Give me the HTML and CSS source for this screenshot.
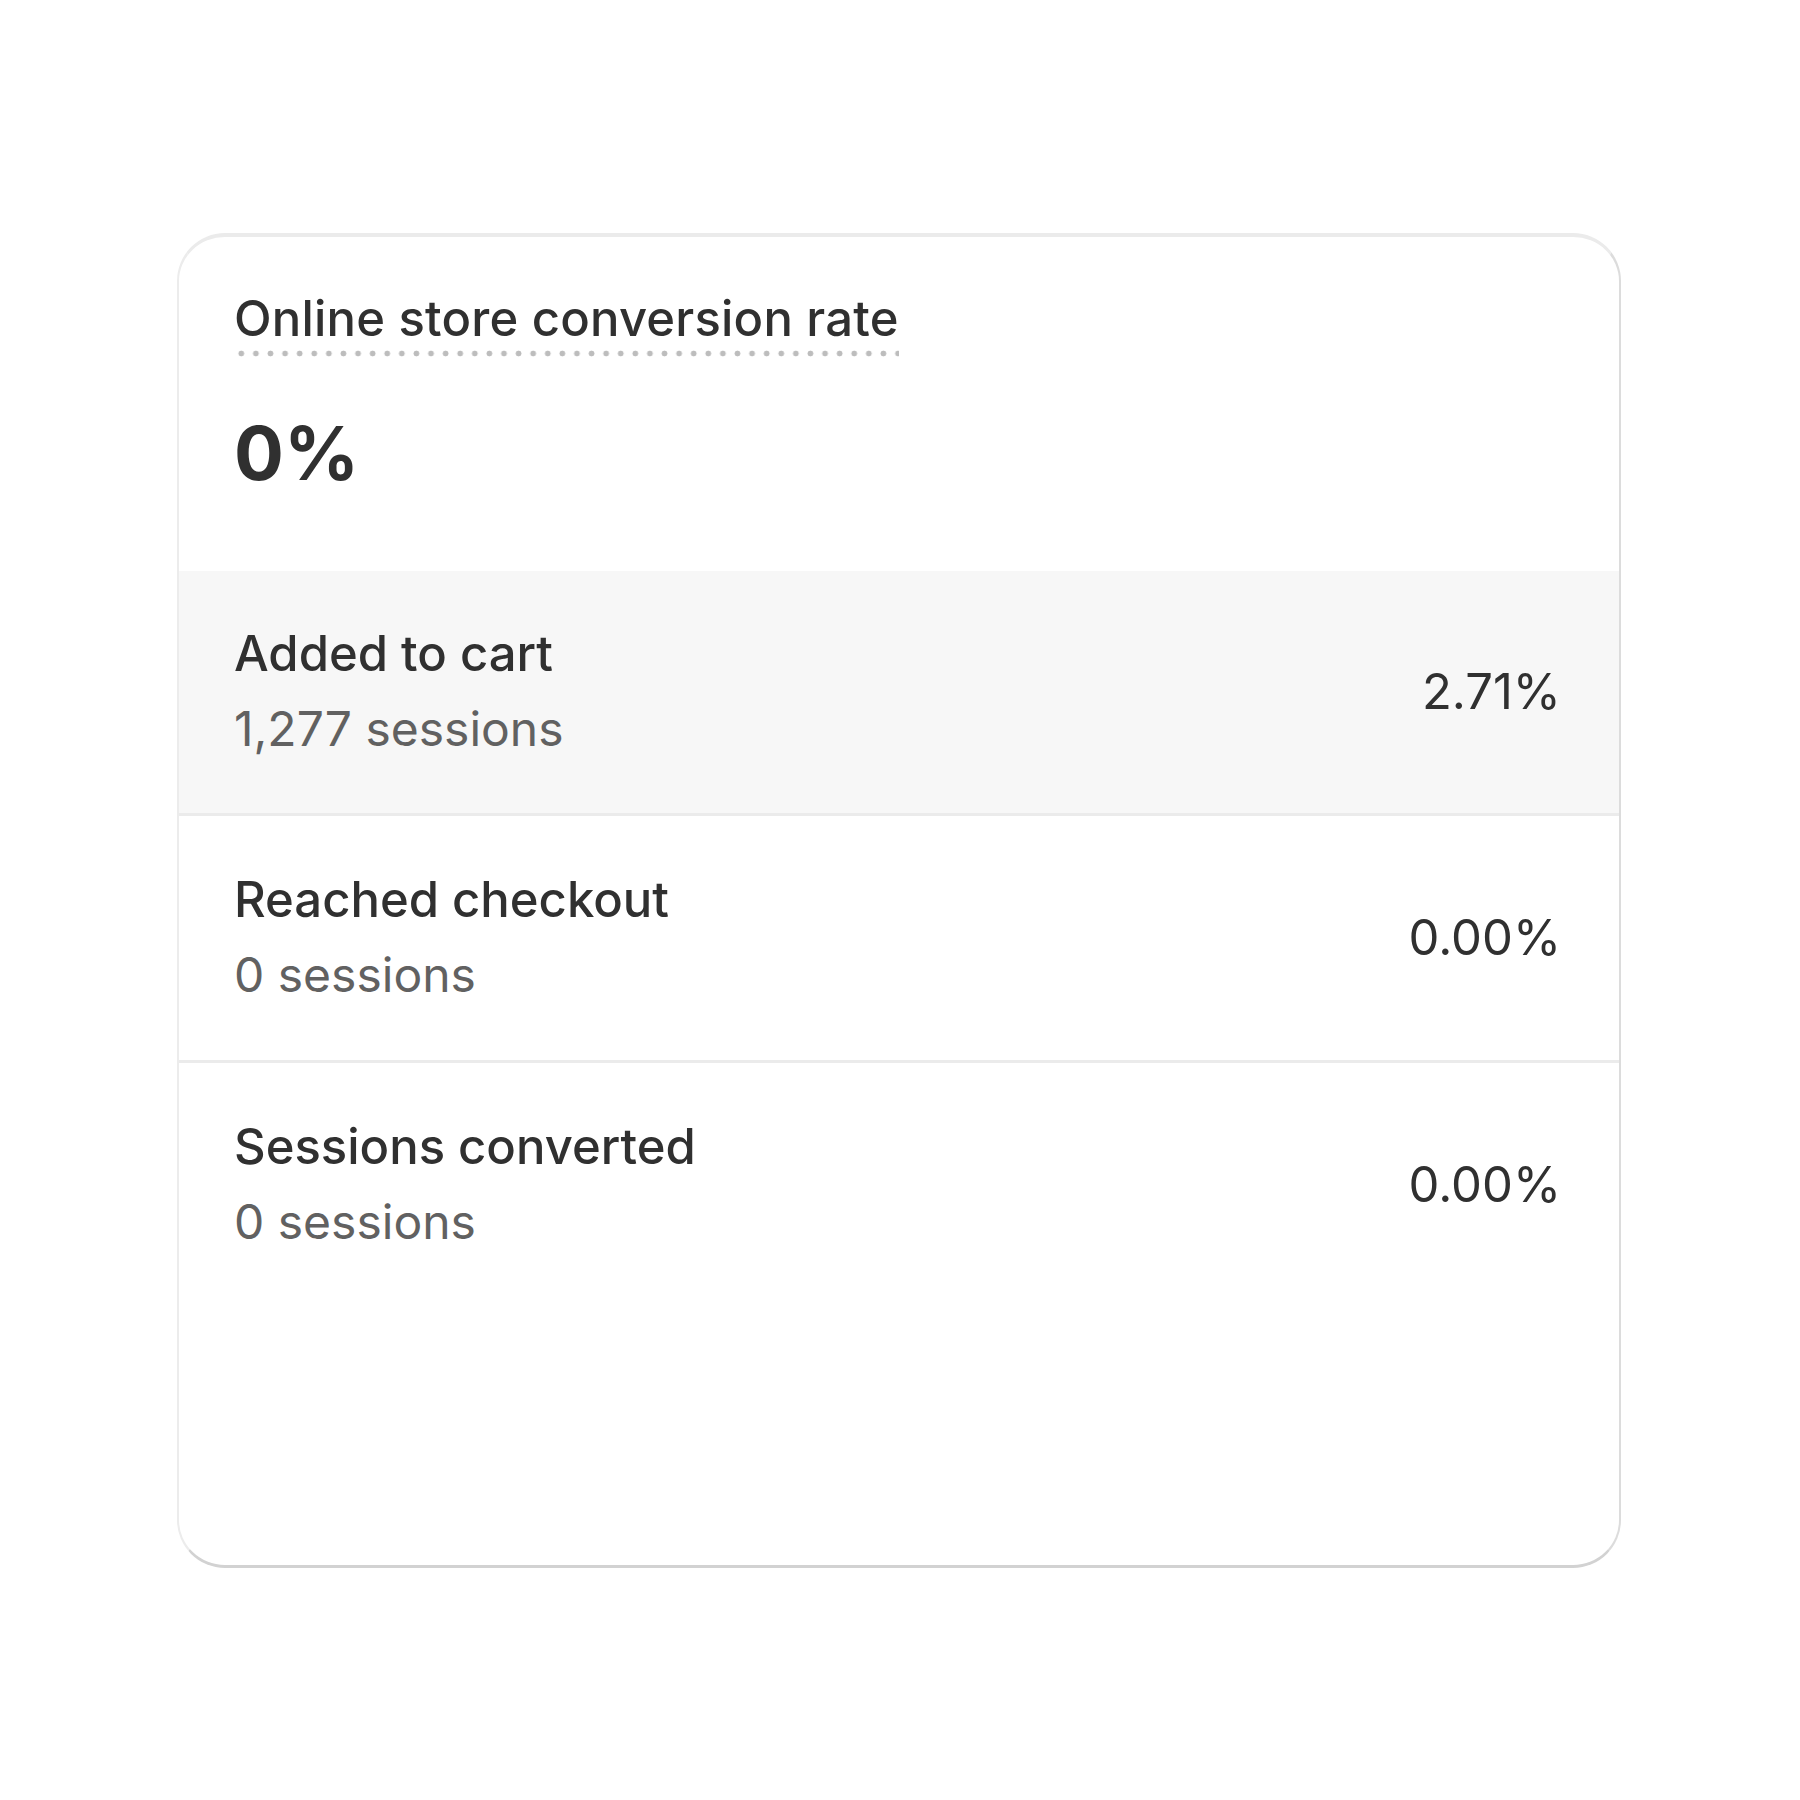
FILE: index.html
```html
<!DOCTYPE html>
<html lang="en">
<head>
<meta charset="utf-8">
<title>Online store conversion rate</title>
<link rel="stylesheet" href="styles.css">
</head>
<body>
<section class="card">
  <header class="card-head">
    <h2 class="card-title"><span class="dotted">Online store conversion rate</span></h2>
    <div class="big-value">0%</div>
  </header>
  <ul class="steps">
    <li class="step step-active">
      <div class="step-text">
        <div class="step-label">Added to cart</div>
        <div class="step-sub">1,277 sessions</div>
      </div>
      <div class="step-rate">2.71%</div>
    </li>
    <li class="step">
      <div class="step-text">
        <div class="step-label">Reached checkout</div>
        <div class="step-sub">0 sessions</div>
      </div>
      <div class="step-rate">0.00%</div>
    </li>
    <li class="step step-last">
      <div class="step-text">
        <div class="step-label">Sessions converted</div>
        <div class="step-sub">0 sessions</div>
      </div>
      <div class="step-rate">0.00%</div>
    </li>
  </ul>
</section>
</body>
</html>
```
FILE: styles.css
```css
* { box-sizing: border-box; }
html, body { margin: 0; padding: 0; background: #ffffff; }
body {
  font-family: Inter, "Noto Sans", "Liberation Sans", sans-serif;
  color: #303030;
  padding: 233px 0 0 177px;
}
.card {
  width: 1444px;
  height: 1335px;
  background: #ffffff;
  border-style: solid;
  border-color: #ebebeb #dcdcdc #d2d2d2 #ececec;
  border-width: 4px 2px 3px 2px;
  border-radius: 48px;
  overflow: hidden;
  display: flex;
  flex-direction: column;
}
.card-head {
  padding: 50px 58px 73px 55px;
}
.card-title {
  margin: 0;
  font-size: 49px;
  line-height: 64px;
  font-weight: 500;
  letter-spacing: 0.2px;
}
.dotted {
  display: inline-block;
  padding-bottom: 6px;
  background-image: radial-gradient(circle, #bdbdbd 2.6px, transparent 3.2px);
  background-size: 14.6px 7px;
  background-repeat: repeat-x;
  background-position: 0 100%;
}
.big-value {
  margin-top: 51px;
  font-size: 74px;
  line-height: 90px;
  font-weight: 700;
}
.steps {
  list-style: none;
  margin: 0;
  padding: 0;
}
.step {
  display: flex;
  align-items: center;
  justify-content: space-between;
  padding: 52px 58px 53px 55px;
  border-bottom: 3px solid #ebebeb;
}
.step-active { background: #f7f7f7; padding-top: 51px; padding-bottom: 52px; }
.step-last { border-bottom: none; }
.step-label {
  font-size: 49px;
  line-height: 64px;
  font-weight: 460;
}
.step-sub {
  margin-top: 11px;
  font-size: 48px;
  line-height: 64px;
  color: #616161;
  font-variant-numeric: proportional-nums;
}
.step-rate {
  font-size: 49px;
  line-height: 64px;
}
```
